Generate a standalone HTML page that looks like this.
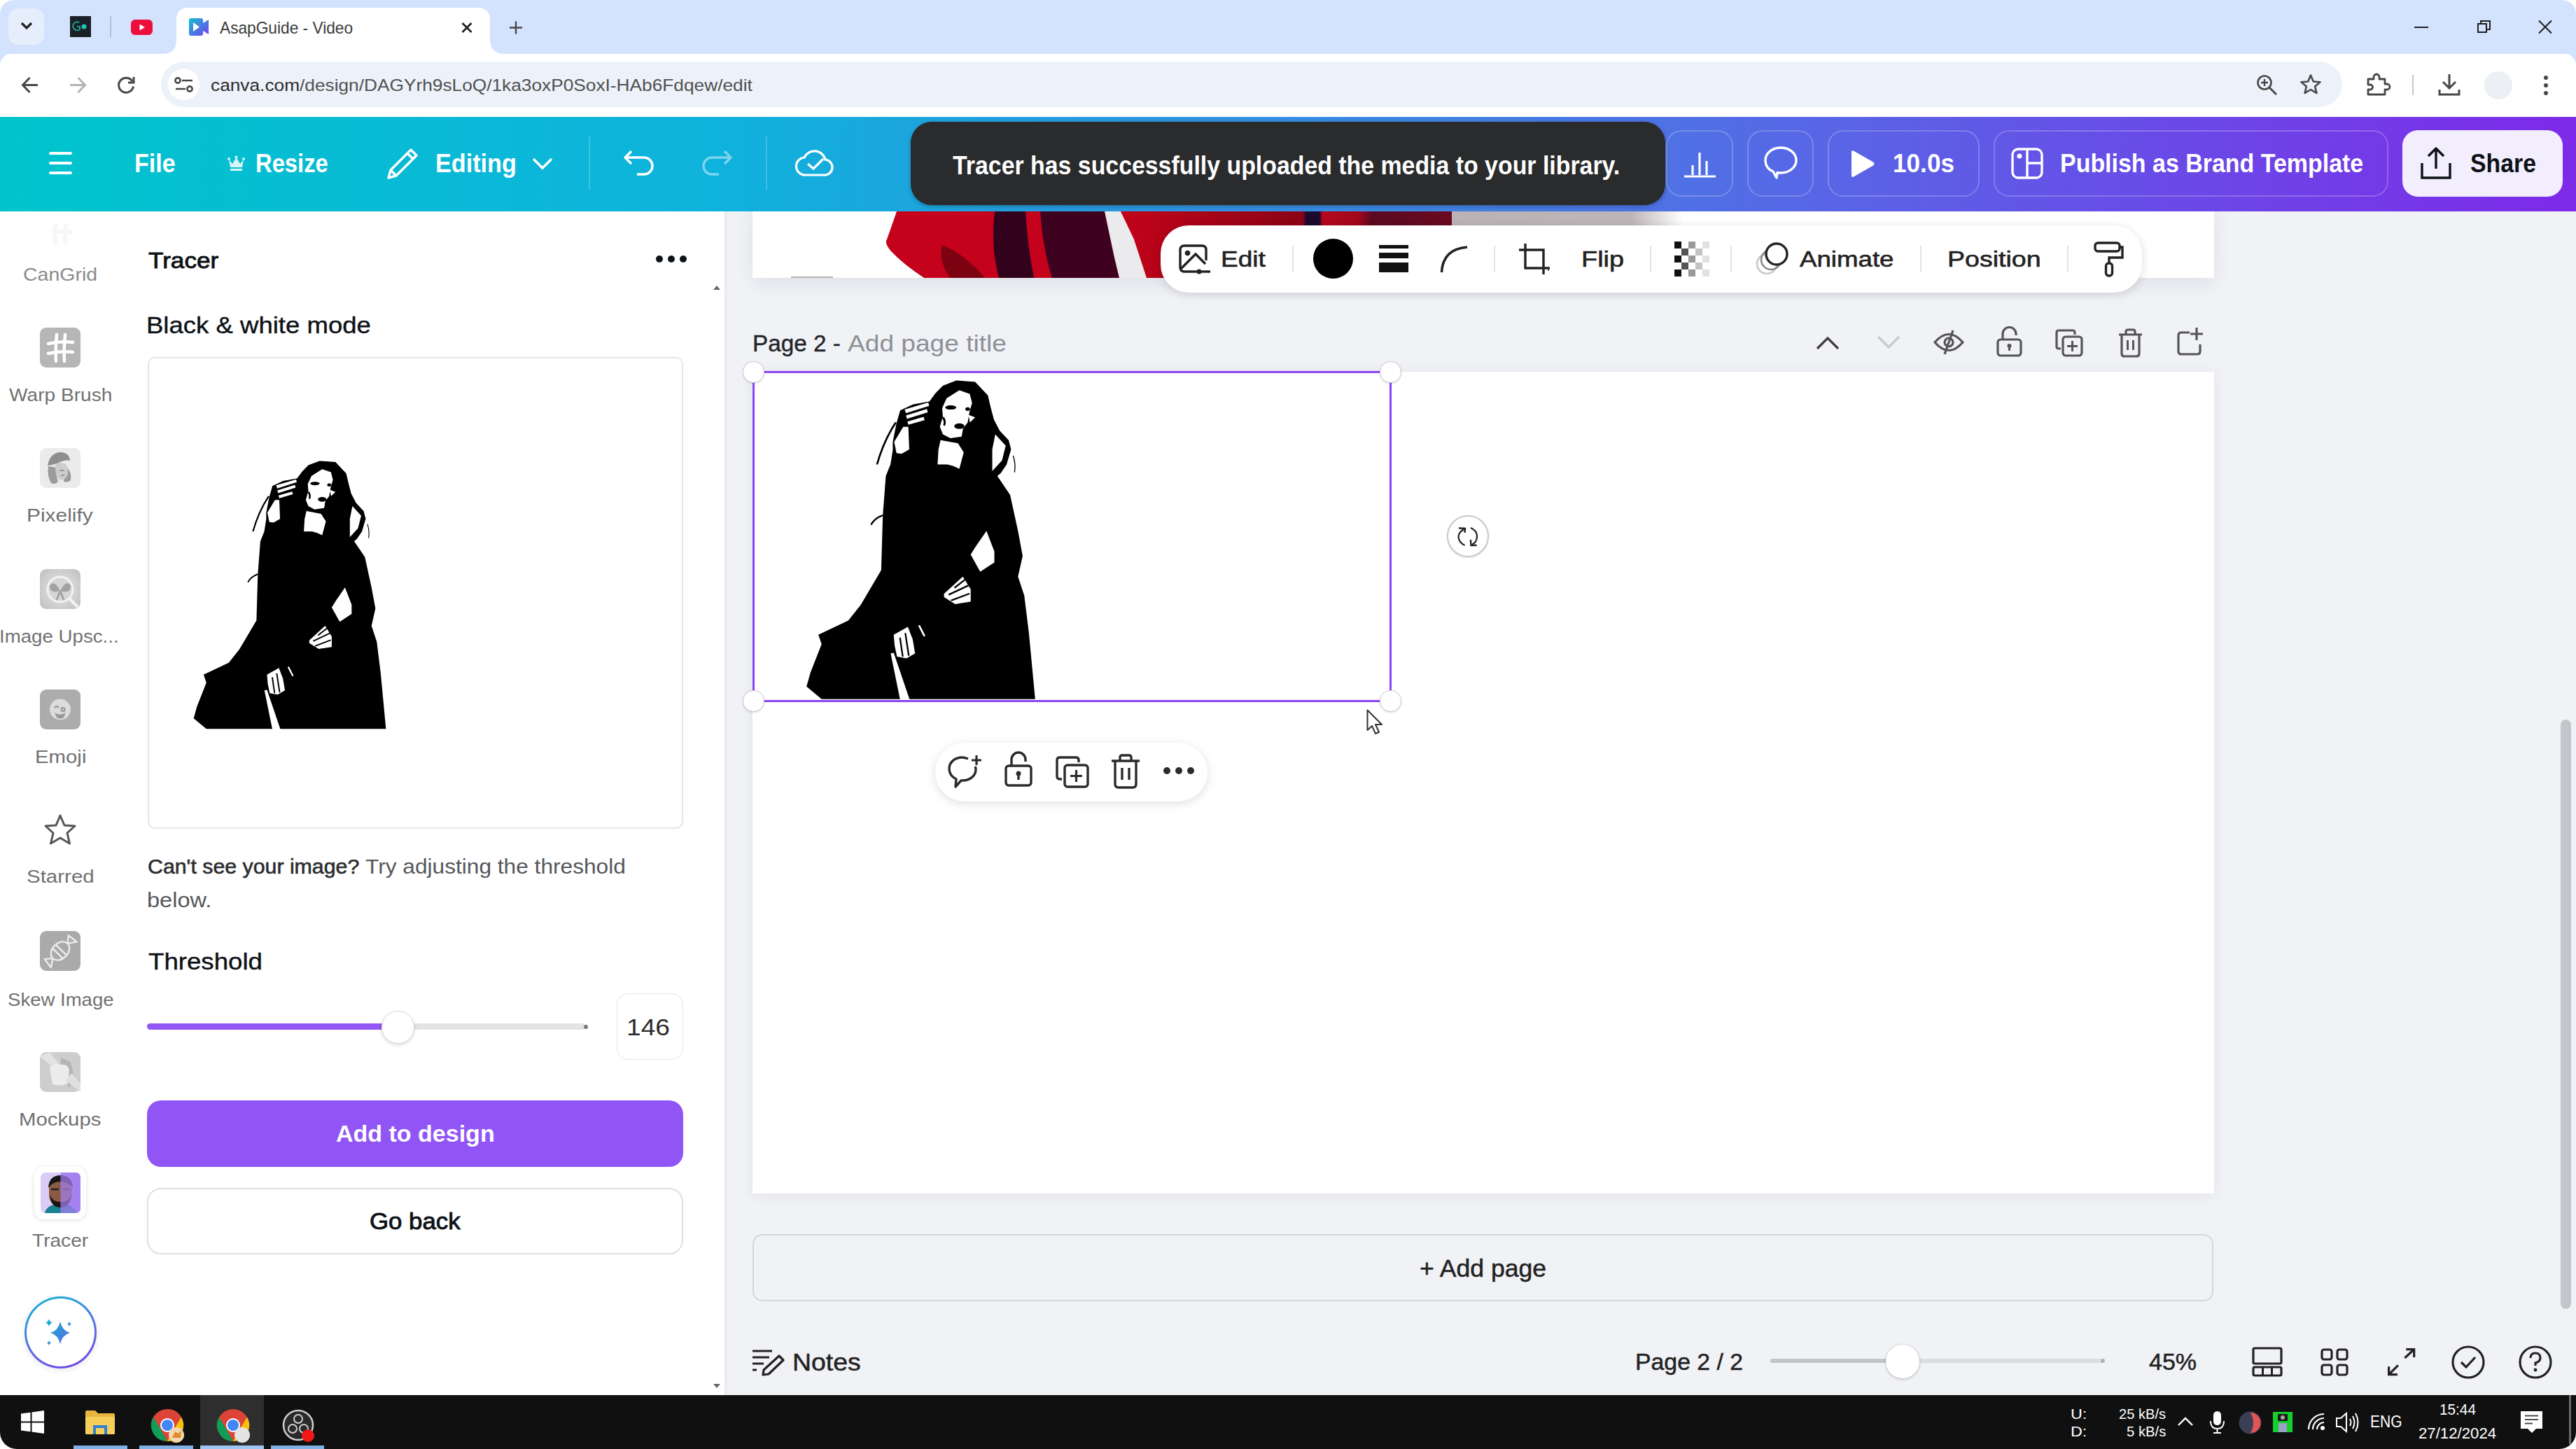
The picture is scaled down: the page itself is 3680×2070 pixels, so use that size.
<!DOCTYPE html>
<html><head><meta charset="utf-8">
<style>
*{margin:0;padding:0;box-sizing:border-box}
html,body{width:3680px;height:2070px;overflow:hidden;background:#fff;font-family:"Liberation Sans",sans-serif;position:relative}
.a{position:absolute}
.t{position:absolute;white-space:nowrap;line-height:1}
svg{position:absolute;overflow:visible}
</style></head><body>
<!-- CANVAS -->
<div class="a" style="left:1035px;top:302px;width:2645px;height:1691px;background:#f1f2f6"></div>
<!-- page 1 strip -->
<div class="a" style="left:1075px;top:290px;width:2088px;height:107px;background:#fff;box-shadow:0 8px 26px rgba(30,30,60,0.08)"></div>
<svg style="left:1075px;top:302px" width="2088" height="95" viewBox="0 0 2088 95">
<defs><linearGradient id="pg" x1="0" x2="1"><stop offset="0" stop-color="#bab2b4"/><stop offset="0.78" stop-color="#bdb6b8"/><stop offset="1" stop-color="#ffffff"/></linearGradient>
<linearGradient id="rg" x1="0" x2="1"><stop offset="0" stop-color="#c2021a"/><stop offset="0.55" stop-color="#8a0414"/><stop offset="0.56" stop-color="#1c0a2e"/><stop offset="0.6" stop-color="#1c0a2e"/><stop offset="0.61" stop-color="#b5081c"/><stop offset="0.72" stop-color="#a0061a"/><stop offset="0.76" stop-color="#5a0a22"/><stop offset="1" stop-color="#6a0a1e"/></linearGradient></defs>
<rect x="999" y="0" width="330" height="95" fill="url(#pg)"/>
<path d="M206 0 L526 0 L563 95 L245 95 Q215 75 198 57 Q188 45 192 40 Z" fill="#c4021b"/>
<path d="M271 48 Q305 62 332 95 L282 95 Q265 70 271 48 Z" fill="#7c0212"/>
<path d="M346 0 L390 0 Q393 50 402 95 L352 95 Q340 50 346 0 Z" fill="#32021c"/>
<path d="M411 0 L503 0 L517 66 L524 95 L428 95 Q415 55 411 0 Z" fill="#3e0220"/>
<path d="M503 0 L526 0 L545 40 L563 95 L524 95 L517 66 Z" fill="#ebeaec"/>
<path d="M526 0 L999 0 L999 95 L563 95 L545 40 Z" fill="url(#rg)"/>
<path d="M55 93 L115 93 L115 95 L55 95 Z" fill="#666" opacity="0.5"/>
</svg>
<!-- page 2 header -->
<div class="t" style="left:1075.0px;top:474px;font-size:33px;color:#222428;-webkit-text-stroke:0.4px #222428;transform:scaleX(1.0082);transform-origin:0 0">Page 2 -</div>
<div class="t" style="left:1211.0px;top:474px;font-size:33px;color:#8d9096;transform:scaleX(1.1244);transform-origin:0 0">Add page title</div>
<svg style="left:2594px;top:480px" width="34" height="20" viewBox="0 0 34 20"><path d="M2 18 L17 3 L32 18" fill="none" stroke="#3d3d3d" stroke-width="3.2"/></svg>
<svg style="left:2681px;top:479px" width="34" height="20" viewBox="0 0 34 20"><path d="M2 2 L17 17 L32 2" fill="none" stroke="#c9cacd" stroke-width="3.2"/></svg>
<svg style="left:2762px;top:470px" width="44" height="38" viewBox="0 0 44 38"><path d="M2 19 Q22 -4 42 19 Q22 42 2 19 Z" fill="none" stroke="#555" stroke-width="3.2"/><circle cx="22" cy="19" r="6" fill="none" stroke="#555" stroke-width="3.2"/><path d="M28 2 L16 36" stroke="#555" stroke-width="3.2"/></svg>
<svg style="left:2852px;top:465px" width="37" height="45" viewBox="0 0 37 45"><path d="M9 20 V12 A9.5 9.5 0 0 1 28 12 V14" fill="none" stroke="#555" stroke-width="3.2"/><rect x="2" y="20" width="33" height="23" rx="4" fill="none" stroke="#555" stroke-width="3.2"/><circle cx="18.5" cy="29" r="3" fill="#555"/><path d="M18.5 30 V36" stroke="#555" stroke-width="3"/></svg>
<svg style="left:2936px;top:470px" width="40" height="40" viewBox="0 0 40 40"><path d="M8 28 H5 Q2 28 2 25 V5 Q2 2 5 2 H25 Q28 2 28 5 V8" fill="none" stroke="#555" stroke-width="3.2"/><rect x="11" y="11" width="27" height="27" rx="4" fill="none" stroke="#555" stroke-width="3.2"/><path d="M24.5 17 V32 M17 24.5 H32" stroke="#555" stroke-width="3"/></svg>
<svg style="left:3025px;top:469px" width="37" height="42" viewBox="0 0 37 42"><path d="M2 9 H35 M12 9 V5 Q12 2 15 2 H22 Q25 2 25 5 V9" fill="none" stroke="#555" stroke-width="3.2"/><path d="M6 9 V36 Q6 40 10 40 H27 Q31 40 31 36 V9" fill="none" stroke="#555" stroke-width="3.2"/><path d="M14.5 17 V31 M22.5 17 V31" stroke="#555" stroke-width="3"/></svg>
<svg style="left:3110px;top:466px" width="39" height="42" viewBox="0 0 39 42"><path d="M18 9 H6 Q2 9 2 13 V36 Q2 40 6 40 H29 Q33 40 33 36 V26" fill="none" stroke="#555" stroke-width="3.2"/><path d="M28 2 V20 M19 11 H37" stroke="#555" stroke-width="3.2"/></svg>
<!-- page 2 -->
<div class="a" style="left:1075px;top:531px;width:2088px;height:1174px;background:#fff;box-shadow:0 2px 18px rgba(30,30,60,0.07)"></div>
<svg style="left:1130px;top:530px" width="370" height="480" viewBox="0 0 1117 1449"><path d="M713 41 L794 47 L849 105 L862 160 L875 209 L900 257 L939 299 L949 338 L930 403 L905 440 L890 453 L945 534 L979 690 L999 798 L979 887 L1006 968 L1026 1130 L1053 1415 L511 1415 L443 1215 L430 1218 L470 1415 L132 1415 L67 1361 L84 1300 L132 1178 L118 1137 L247 1076 L301 1008 L349 927 L389 859 L396 622 L409 453 L429 403 L439 340 L439 306 L455 225 L471 170 L526 144 L597 131 L623 96 L655 63 Z" fill="#000"/><path d="M726 83 L771 99 L781 138 L770 175 L762 222 L742 248 L736 283 L687 290 L655 273 L642 241 L655 196 L652 160 L671 118 Z M765 189 L794 200 L772 222 Z M645 298 L720 312 L745 351 L726 422 L700 410 L674 403 L632 403 L636 338 Z M445 306 L484 241 L506 241 L510 338 L477 357 L455 354 Z M490 166 L592 136 L596 150 L496 182 Z M496 192 L586 164 L590 178 L500 206 Z M502 218 L572 198 L576 212 L506 232 Z M881 273 L926 322 L910 386 L868 432 L868 338 Z M843 690 L877 778 L877 826 L816 866 L775 792 L796 758 Z M660 961 L741 887 L775 941 L775 995 L708 1005 L660 975 Z M443 1137 L504 1103 L525 1158 L535 1218 L498 1239 L457 1232 L447 1184 Z" fill="#fff"/><ellipse cx="689" cy="157" rx="24" ry="9" fill="#000"/><ellipse cx="762" cy="164" rx="10" ry="8" fill="#000"/><ellipse cx="726" cy="238" rx="22" ry="12" fill="#000"/><path d="M655 200 Q668 215 660 235" fill="none" stroke="#000" stroke-width="9"/><path d="M680 965 L765 925 M690 990 L770 960 M705 935 L750 900" stroke="#000" stroke-width="7"/><path d="M470 1150 L482 1232 M493 1130 L508 1228" stroke="#000" stroke-width="7"/><path d="M452 222 Q400 300 371 403" fill="none" stroke="#000" stroke-width="8"/><path d="M396 622 Q360 635 345 663" fill="none" stroke="#000" stroke-width="7"/><path d="M958 365 Q970 400 964 437" fill="none" stroke="#000" stroke-width="4"/><path d="M552 1097 L576 1144" stroke="#fff" stroke-width="8"/></svg>
<div class="a" style="left:1075px;top:530px;width:913px;height:473px;border:3px solid #8b45f2"></div>
<div class="a" style="left:1061px;top:516px;width:31px;height:31px;border-radius:50%;background:#fff;border:1.5px solid #cfcfd3;box-shadow:0 1px 3px rgba(0,0,0,0.15)"></div>
<div class="a" style="left:1971px;top:516px;width:31px;height:31px;border-radius:50%;background:#fff;border:1.5px solid #cfcfd3;box-shadow:0 1px 3px rgba(0,0,0,0.15)"></div>
<div class="a" style="left:1061px;top:986px;width:31px;height:31px;border-radius:50%;background:#fff;border:1.5px solid #cfcfd3;box-shadow:0 1px 3px rgba(0,0,0,0.15)"></div>
<div class="a" style="left:1971px;top:986px;width:31px;height:31px;border-radius:50%;background:#fff;border:1.5px solid #cfcfd3;box-shadow:0 1px 3px rgba(0,0,0,0.15)"></div>
<div class="a" style="left:2067px;top:736px;width:60px;height:60px;border-radius:50%;background:#fff;border:2px solid #c9c9cc;box-shadow:0 1px 3px rgba(0,0,0,0.1)"></div>
<svg style="left:2082px;top:752px" width="30" height="30" viewBox="0 0 30 30"><path d="M10.5 3.5 Q1.5 8 1.5 15 Q2 23 10.5 27" fill="none" stroke="#222" stroke-width="2.2"/><path d="M2 2.5 L11 2.8 L10.6 9" fill="none" stroke="#222" stroke-width="2.4"/><path d="M19 2 Q28 6 28 14.5 Q28 22 21 26" fill="none" stroke="#222" stroke-width="2.2"/><path d="M19 19 L19.4 27 L27.7 27" fill="none" stroke="#222" stroke-width="2.4"/></svg>
<!-- mini toolbar -->
<div class="a" style="left:1336px;top:1061px;width:389px;height:84px;border-radius:42px;background:#fff;box-shadow:0 3px 14px rgba(0,0,0,0.13)"></div>
<svg style="left:1353px;top:1078px" width="52" height="50" viewBox="0 0 52 50"><path d="M30 6 Q24 4 22 4 C11 4 3 11 3 20 C3 27 7 32 13 35 L12 46 L20 37 Q21 37 22 37 C33 37 41 30 41 21 Q41 19 40 17" fill="none" stroke="#2b2b2b" stroke-width="3.4" stroke-linejoin="round"/><path d="M42 1 V15 M35 8 H49" stroke="#2b2b2b" stroke-width="3.2"/></svg>
<svg style="left:1435px;top:1072px" width="40" height="52" viewBox="0 0 40 52"><path d="M10 22 V13 A10 10 0 0 1 30 13 V16" fill="none" stroke="#2b2b2b" stroke-width="3.4"/><rect x="2" y="22" width="36" height="28" rx="4" fill="none" stroke="#2b2b2b" stroke-width="3.4"/><circle cx="20" cy="33" r="3.5" fill="#2b2b2b"/><path d="M20 34 V42" stroke="#2b2b2b" stroke-width="3.4"/></svg>
<svg style="left:1508px;top:1080px" width="48" height="46" viewBox="0 0 48 46"><path d="M9 33 H6 Q2 33 2 29 V6 Q2 2 6 2 H29 Q33 2 33 6 V9" fill="none" stroke="#2b2b2b" stroke-width="3.4"/><rect x="13" y="13" width="33" height="31" rx="4" fill="none" stroke="#2b2b2b" stroke-width="3.4"/><path d="M29.5 20 V37 M21 28.5 H38" stroke="#2b2b2b" stroke-width="3.2"/></svg>
<svg style="left:1586px;top:1077px" width="44" height="50" viewBox="0 0 44 50"><path d="M2 10 H42 M14 10 V5 Q14 2 17 2 H27 Q30 2 30 5 V10" fill="none" stroke="#2b2b2b" stroke-width="3.4"/><path d="M7 10 V43 Q7 48 12 48 H32 Q37 48 37 43 V10" fill="none" stroke="#2b2b2b" stroke-width="3.4"/><path d="M17 20 V37 M27 20 V37" stroke="#2b2b2b" stroke-width="3.4"/></svg>
<div class="a" style="left:1662px;top:1096px;width:10px;height:10px;border-radius:50%;background:#2b2b2b"></div>
<div class="a" style="left:1679px;top:1096px;width:10px;height:10px;border-radius:50%;background:#2b2b2b"></div>
<div class="a" style="left:1696px;top:1096px;width:10px;height:10px;border-radius:50%;background:#2b2b2b"></div>
<!-- cursor -->
<svg style="left:1952px;top:1013px" width="26" height="38" viewBox="0 0 26 38"><path d="M1.5 1.5 L1.5 30 L8 24 L13 35 L18 33 L13 22 L22 22 Z" fill="#fff" stroke="#333" stroke-width="2" stroke-linejoin="round"/></svg>
<!-- floating toolbar -->
<div class="a" style="left:1658px;top:322px;width:1402px;height:96px;border-radius:40px;background:#fff;box-shadow:0 3px 14px rgba(0,0,0,0.14)"></div>
<svg style="left:1683px;top:348px" width="48" height="45" viewBox="0 0 48 45"><path d="M22 40 H9 Q3 40 3 34 V9 Q3 3 9 3 H34 Q40 3 40 9 V24" fill="none" stroke="#222" stroke-width="3.4"/><circle cx="13.5" cy="13.5" r="3.8" fill="#222"/><path d="M4 36 L25 15 L39 29" fill="none" stroke="#222" stroke-width="3.4"/><path d="M22 40 H46" stroke="#222" stroke-width="3.4"/><circle cx="30" cy="40" r="3.5" fill="#222"/></svg>
<div class="t" style="left:1744.1px;top:354px;font-size:32px;color:#222;-webkit-text-stroke:0.6px #222;transform:scaleX(1.1574);transform-origin:0 0">Edit</div>
<div class="a" style="left:1846px;top:351px;width:2px;height:38px;background:#e3e3e5"></div>
<div class="a" style="left:1876px;top:341px;width:57px;height:57px;border-radius:50%;background:#000"></div>
<div class="a" style="left:1970px;top:350px;width:42px;height:5px;background:#111"></div>
<div class="a" style="left:1970px;top:361px;width:42px;height:8px;background:#111"></div>
<div class="a" style="left:1970px;top:375px;width:42px;height:14px;background:#111"></div>
<svg style="left:2057px;top:350px" width="42" height="40" viewBox="0 0 42 40"><path d="M2.5 39 Q4 6 39 3" fill="none" stroke="#222" stroke-width="3.6"/></svg>
<div class="a" style="left:2134px;top:351px;width:2px;height:38px;background:#e3e3e5"></div>
<svg style="left:2168px;top:346px" width="48" height="48" viewBox="0 0 48 48"><path d="M11 2 V37 H46 M2 11 H37 V46" fill="none" stroke="#222" stroke-width="3.4"/><circle cx="44" cy="40" r="1" fill="#222"/></svg>
<div class="t" style="left:2259.3px;top:354px;font-size:32px;color:#222;-webkit-text-stroke:0.6px #222;transform:scaleX(1.1837);transform-origin:0 0">Flip</div>
<div class="a" style="left:2357px;top:351px;width:2px;height:38px;background:#e3e3e5"></div>
<svg style="left:2392px;top:345px" width="50" height="50" viewBox="0 0 50 50">
<rect x="0" y="0" width="10" height="10" fill="#111"/><rect x="20" y="0" width="10" height="10" fill="#999"/><rect x="40" y="0" width="10" height="10" fill="#e2e2e2"/>
<rect x="10" y="10" width="10" height="10" fill="#555"/><rect x="30" y="10" width="10" height="10" fill="#c4c4c4"/>
<rect x="0" y="20" width="10" height="10" fill="#111"/><rect x="20" y="20" width="10" height="10" fill="#999"/><rect x="40" y="20" width="10" height="10" fill="#e2e2e2"/>
<rect x="10" y="30" width="10" height="10" fill="#555"/><rect x="30" y="30" width="10" height="10" fill="#c4c4c4"/>
<rect x="0" y="40" width="10" height="10" fill="#111"/><rect x="20" y="40" width="10" height="10" fill="#999"/><rect x="40" y="40" width="10" height="10" fill="#e2e2e2"/>
</svg>
<div class="a" style="left:2472px;top:351px;width:2px;height:38px;background:#e3e3e5"></div>
<svg style="left:2507px;top:344px" width="50" height="50" viewBox="0 0 50 50"><circle cx="17" cy="33" r="14" fill="none" stroke="#c8c8c8" stroke-width="2.6"/><circle cx="23" cy="27" r="14" fill="none" stroke="#8a8a8a" stroke-width="2.6"/><circle cx="31" cy="19" r="15" fill="#fff" stroke="#222" stroke-width="3.4"/></svg>
<div class="t" style="left:2571.2px;top:354px;font-size:32px;color:#222;-webkit-text-stroke:0.6px #222;transform:scaleX(1.1453);transform-origin:0 0">Animate</div>
<div class="a" style="left:2743px;top:351px;width:2px;height:38px;background:#e3e3e5"></div>
<div class="t" style="left:2782.3px;top:354px;font-size:32px;color:#222;-webkit-text-stroke:0.6px #222;transform:scaleX(1.1727);transform-origin:0 0">Position</div>
<div class="a" style="left:2953px;top:351px;width:2px;height:38px;background:#e3e3e5"></div>
<svg style="left:2990px;top:344px" width="46" height="52" viewBox="0 0 46 52"><rect x="3" y="3" width="35" height="12" rx="4" fill="none" stroke="#222" stroke-width="3.4"/><path d="M38 9 H42 V24 H23 V32" fill="none" stroke="#222" stroke-width="3.4"/><rect x="18.5" y="32" width="9" height="18" rx="4" fill="none" stroke="#222" stroke-width="3.4"/></svg>
<!-- add page -->
<div class="a" style="left:1075px;top:1763px;width:2087px;height:96px;border:2px solid #d6d7db;border-radius:14px"></div>
<div class="t" style="left:2028.0px;top:1794px;font-size:35px;color:#222;-webkit-text-stroke:0.5px #222;transform:scaleX(1.0170);transform-origin:0 0">+ Add page</div>
<!-- bottom bar -->
<svg style="left:1073px;top:1927px" width="48" height="38" viewBox="0 0 48 38"><path d="M2 3 H30 M2 12 H26 M2 21 H18 M2 30 H8" stroke="#222" stroke-width="3.2"/><path d="M40 10 L46 16 L25 36 L17 37 L18 30 Z" fill="none" stroke="#222" stroke-width="3.2" stroke-linejoin="round"/></svg>
<div class="t" style="left:1131.7px;top:1928px;font-size:35px;color:#222;-webkit-text-stroke:0.5px #222;transform:scaleX(1.0693);transform-origin:0 0">Notes</div>
<div class="t" style="left:2335.5px;top:1928px;font-size:34px;color:#222;-webkit-text-stroke:0.5px #222;transform:scaleX(0.9941);transform-origin:0 0">Page 2 / 2</div>
<div class="a" style="left:2529px;top:1941px;width:477px;height:6px;border-radius:3px;background:#dcdde1"></div>
<div class="a" style="left:2529px;top:1941px;width:190px;height:6px;border-radius:3px;background:#c2c4c9"></div>
<div class="a" style="left:3001px;top:1941px;width:6px;height:6px;border-radius:50%;background:#b0b2b6"></div>
<div class="a" style="left:2694px;top:1921px;width:48px;height:48px;border-radius:50%;background:#fff;box-shadow:0 1px 4px rgba(0,0,0,0.25)"></div>
<div class="t" style="left:3070.0px;top:1928px;font-size:34px;color:#222;-webkit-text-stroke:0.5px #222;transform:scaleX(1.0000);transform-origin:0 0">45%</div>
<svg style="left:3216px;top:1924px" width="46" height="44" viewBox="0 0 46 44"><rect x="3" y="2" width="40" height="22" rx="2" fill="none" stroke="#222" stroke-width="3.2"/><rect x="3" y="29" width="40" height="12" rx="2" fill="none" stroke="#222" stroke-width="3.2"/><path d="M16.5 29 V41 M29.5 29 V41" stroke="#222" stroke-width="3"/></svg>
<svg style="left:3315px;top:1926px" width="40" height="40" viewBox="0 0 40 40"><rect x="2" y="2" width="14" height="14" rx="3" fill="none" stroke="#222" stroke-width="3.2"/><rect x="24" y="2" width="14" height="14" rx="3" fill="none" stroke="#222" stroke-width="3.2"/><rect x="2" y="24" width="14" height="14" rx="3" fill="none" stroke="#222" stroke-width="3.2"/><rect x="24" y="24" width="14" height="14" rx="3" fill="none" stroke="#222" stroke-width="3.2"/></svg>
<svg style="left:3410px;top:1926px" width="41" height="40" viewBox="0 0 41 40"><path d="M25.4 14 L38.7 1.6 M27.3 1.6 H38.7 V13 M15.9 24.4 L2.6 37.7 M2.6 26.3 V37.7 H14.9" fill="none" stroke="#222" stroke-width="3.2"/></svg>
<svg style="left:3502px;top:1922px" width="48" height="48" viewBox="0 0 48 48"><circle cx="24" cy="24" r="22" fill="none" stroke="#222" stroke-width="3.2"/><path d="M14 24 L21 31 L34 17" fill="none" stroke="#222" stroke-width="3.2"/></svg>
<svg style="left:3598px;top:1922px" width="48" height="48" viewBox="0 0 48 48"><circle cx="24" cy="24" r="22" fill="none" stroke="#222" stroke-width="3.2"/><path d="M17 18 Q17 11 24 11 Q31 11 31 18 Q31 23 24 25 V29" fill="none" stroke="#222" stroke-width="3.2"/><circle cx="24" cy="35" r="2.4" fill="#222"/></svg>
<!-- scrollbar -->
<div class="a" style="left:3658px;top:1028px;width:15px;height:842px;border-radius:8px;background:#c4c5ca"></div>
<!-- LEFT RAIL -->
<div class="a" style="left:0;top:302px;width:172px;height:1691px;background:#fff"></div>
<svg style="left:68px;top:318px" width="40" height="34" viewBox="0 0 40 34"><path d="M6 14 Q20 12 36 14 M12 2 Q10 18 12 32 M26 2 Q24 18 26 32" fill="none" stroke="#f7f7f7" stroke-width="6"/></svg>
<div class="t lbl" style="left:32.5px;top:379px;font-size:26px;color:#8a8a8a;transform:scaleX(1.0957);transform-origin:0 0">CanGrid</div>
<div class="a" style="left:57px;top:468px;width:58px;height:57px;border-radius:9px;background:#b6b6b6"></div>
<svg style="left:57px;top:468px" width="58" height="57" viewBox="0 0 58 57"><path d="M12 23 Q29 19 47 21 M12 37 Q29 33 47 35 M24 10 Q22 30 23 48 M36 10 Q34 30 35 48" fill="none" stroke="#fff" stroke-width="4.5" stroke-linecap="round"/></svg>
<div class="t lbl" style="left:13.0px;top:551px;font-size:26px;color:#717171;transform:scaleX(1.0815);transform-origin:0 0">Warp Brush</div>
<div class="a" style="left:57px;top:640px;width:58px;height:57px;border-radius:9px;background:#ebebeb"></div>
<svg style="left:57px;top:640px" width="58" height="57" viewBox="0 0 58 57"><path d="M12 26 Q10 40 16 50 Q22 53 26 48 Q22 38 24 28 Z" fill="#9c9c9c"/><path d="M37 26 Q46 34 44 46 Q40 50 34 48 Z" fill="#9a9a9a"/><path d="M22 22 Q30 18 38 24 Q42 34 38 42 Q32 48 26 44 Q21 36 22 22 Z" fill="#cdcdcd"/><path d="M28 32 Q32 31 35 33 M30 39 Q33 40 35 38" fill="none" stroke="#8a8a8a" stroke-width="1.5"/><path d="M11 25 Q14 8 28 6 Q42 6 43 18 Q36 16 24 22 Q16 25 11 25 Z" fill="#8e8e8e"/></svg>
<div class="t lbl" style="left:37.7px;top:723px;font-size:26px;color:#717171;transform:scaleX(1.1500);transform-origin:0 0">Pixelify</div>
<div class="a" style="left:57px;top:813px;width:58px;height:57px;border-radius:9px;background:radial-gradient(circle at 50% 50%,#e6e6e6 0%,#cfcfcf 60%,#bdbdbd 100%)"></div>
<svg style="left:57px;top:813px" width="58" height="57" viewBox="0 0 58 57"><circle cx="29" cy="29" r="18" fill="#d6d6d6" stroke="#f2f2f2" stroke-width="3"/><path d="M29 31 Q20 14 14 24 Q14 36 29 31 Z M29 31 Q38 14 44 24 Q44 36 29 31 Z" fill="#a2a2a2"/><path d="M29 31 L24 44 M29 31 L34 44" stroke="#a2a2a2" stroke-width="3"/><path d="M42 42 L53 53" stroke="#f2f2f2" stroke-width="4.5" stroke-linecap="round"/></svg>
<div class="t lbl" style="left:-0.6px;top:896px;font-size:26px;color:#717171;transform:scaleX(1.0641);transform-origin:0 0">Image Upsc...</div>
<div class="a" style="left:57px;top:985px;width:58px;height:57px;border-radius:9px;background:#acacac"></div>
<svg style="left:57px;top:985px" width="58" height="57" viewBox="0 0 58 57"><circle cx="29" cy="28.5" r="15" fill="#dcdcdc"/><path d="M21 26 Q24 22 27 26 M33 26 A2.5 2.5 0 1 0 33.1 26" fill="none" stroke="#9a9a9a" stroke-width="2.5"/><path d="M21 33 Q29 38 37 33 L34 40 Q29 43 24 40 Z" fill="#9a9a9a"/></svg>
<div class="t lbl" style="left:49.7px;top:1068px;font-size:26px;color:#717171;transform:scaleX(1.1290);transform-origin:0 0">Emoji</div>
<svg style="left:62px;top:1162px" width="48" height="48" viewBox="0 0 48 48"><path d="M24 3 L30 17 L45 18 L34 28 L37.5 43 L24 35 L10.5 43 L14 28 L3 18 L18 17 Z" fill="none" stroke="#555" stroke-width="3" stroke-linejoin="round"/></svg>
<div class="t lbl" style="left:38.3px;top:1239px;font-size:26px;color:#717171;transform:scaleX(1.1341);transform-origin:0 0">Starred</div>
<div class="a" style="left:57px;top:1330px;width:58px;height:57px;border-radius:9px;background:#aaaaaa"></div>
<svg style="left:57px;top:1330px" width="58" height="57" viewBox="0 0 58 57"><g transform="rotate(-45 29 28.5)"><ellipse cx="29" cy="28.5" rx="15" ry="11" fill="none" stroke="#ececec" stroke-width="2.4"/><path d="M24 18 V39 M31 17.5 V39.5" stroke="#ececec" stroke-width="2.4"/><path d="M14 28.5 L5 21 L3 36 Z M44 28.5 L53 21 L55 36 Z" fill="none" stroke="#ececec" stroke-width="2.4" stroke-linejoin="round"/></g></svg>
<div class="t lbl" style="left:10.5px;top:1415px;font-size:26px;color:#717171;transform:scaleX(1.0596);transform-origin:0 0">Skew Image</div>
<div class="a" style="left:57px;top:1503px;width:58px;height:57px;border-radius:9px;background:#cdcdcd"></div>
<svg style="left:57px;top:1503px" width="58" height="57" viewBox="0 0 58 57"><path d="M0 6 L14 0 L30 20 L24 26 Z" fill="#e2e2e2"/><path d="M14 22 Q22 14 30 18 Q40 16 42 26 L40 44 Q30 50 18 46 Z" fill="#ececec"/><path d="M30 8 L44 14 L50 40 L40 52 L42 26 Q40 16 30 18 Z" fill="#b4b4b4"/><path d="M36 40 L58 57 L58 46 L46 30 Z" fill="#e0e0e0"/></svg>
<div class="t lbl" style="left:26.7px;top:1586px;font-size:26px;color:#717171;transform:scaleX(1.1287);transform-origin:0 0">Mockups</div>
<div class="a" style="left:49px;top:1667px;width:74px;height:75px;border-radius:14px;background:#fff;box-shadow:0 1px 6px rgba(0,0,0,0.12)"></div>
<div class="a" style="left:58px;top:1675px;width:57px;height:58px;border-radius:7px;background:linear-gradient(90deg,#d9cdf6 0%,#d9cdf6 50%,#b79af2 50%,#a27ff0 100%)"></div>
<svg style="left:58px;top:1675px" width="57" height="58" viewBox="0 0 57 58"><defs><clipPath id="tc"><rect x="0" y="0" width="57" height="58" rx="7"/></clipPath></defs><g clip-path="url(#tc)">
<path d="M6 58 Q8 46 28.5 44 Q49 46 51 58 Z" fill="#17828f"/>
<path d="M12 24 Q12 6 28.5 6 Q45 6 45 24 L45 30 Q45 48 28.5 50 Q12 48 12 30 Z" fill="#8a5a42"/>
<path d="M11 22 Q12 4 28.5 4 Q45 4 46 22 Q40 13 28.5 13 Q17 13 11 22 Z" fill="#161616"/>
<path d="M13 32 Q15 50 28.5 50 Q42 50 44 32 Q40 42 28.5 42 Q17 42 13 32 Z" fill="#1b1412"/>
<path d="M15 24 H26 M31 24 H42" stroke="#222" stroke-width="2.5"/>
<rect x="28.5" y="0" width="29" height="58" fill="#a57ff0" opacity="0.72"/>
</g></svg>
<div class="t lbl" style="left:46.0px;top:1759px;font-size:26px;color:#717171;transform:scaleX(1.0811);transform-origin:0 0">Tracer</div>
<div class="a" style="left:35px;top:1852px;width:103px;height:103px;border-radius:50%;background:linear-gradient(160deg,#13b9d4,#5a6be4 60%,#7a3fe6);box-shadow:0 2px 10px rgba(0,0,0,0.1)"></div>
<div class="a" style="left:38px;top:1855px;width:97px;height:97px;border-radius:50%;background:#fff"></div>
<svg style="left:58px;top:1876px" width="56" height="56" viewBox="0 0 56 56"><defs><linearGradient id="sp" x1="0" y1="0" x2="1" y2="1"><stop offset="0" stop-color="#17a7d6"/><stop offset="1" stop-color="#5b6fe2"/></linearGradient></defs><path d="M28 12 Q31 25 42 28 Q31 31 28 44 Q25 31 14 28 Q25 25 28 12 Z" fill="url(#sp)"/><path d="M12 8 Q13 12.5 17 13.5 Q13 14.5 12 19 Q11 14.5 7 13.5 Q11 12.5 12 8 Z" fill="#17a7d6"/><path d="M41 12 Q41.7 15 44 15.5 Q41.7 16 41 19 Q40.3 16 38 15.5 Q40.3 15 41 12 Z" fill="#3f8ee0"/><path d="M12 39 Q12.7 42 15 42.5 Q12.7 43 12 46 Q11.3 43 9 42.5 Q11.3 42 12 39 Z" fill="#2a9ad9"/></svg>
<!-- SIDE PANEL -->
<div class="a" style="left:172px;top:302px;width:863px;height:1691px;background:#fff"></div>
<div class="a" style="left:1035px;top:302px;width:5px;height:1691px;background:linear-gradient(90deg,#e7e8ec,#f1f2f6)"></div>
<div class="t" style="left:212.0px;top:356px;font-size:32px;color:#0d1216;-webkit-text-stroke:0.9px #0d1216;transform:scaleX(1.0978);transform-origin:0 0">Tracer</div>
<div class="a" style="left:937px;top:365px;width:10px;height:10px;border-radius:50%;background:#0d1216"></div>
<div class="a" style="left:954px;top:365px;width:10px;height:10px;border-radius:50%;background:#0d1216"></div>
<div class="a" style="left:971px;top:365px;width:10px;height:10px;border-radius:50%;background:#0d1216"></div>
<svg style="left:1019px;top:408px" width="10" height="6" viewBox="0 0 10 6"><path d="M0 6 L5 0 L10 6 Z" fill="#666"/></svg>
<div class="t" style="left:209.2px;top:447px;font-size:34px;color:#0d1216;-webkit-text-stroke:0.4px #0d1216;transform:scaleX(1.0746);transform-origin:0 0">Black &amp; white mode</div>
<div class="a" style="left:211px;top:510px;width:765px;height:674px;border:2px solid #e6e6e8;border-radius:10px;background:#fff"></div>
<!-- panel silhouette placeholder -->
<svg style="left:258.3px;top:646.9px" width="311.2" height="403.7" viewBox="0 0 1117 1449"><path d="M713 41 L794 47 L849 105 L862 160 L875 209 L900 257 L939 299 L949 338 L930 403 L905 440 L890 453 L945 534 L979 690 L999 798 L979 887 L1006 968 L1026 1130 L1053 1415 L511 1415 L443 1215 L430 1218 L470 1415 L132 1415 L67 1361 L84 1300 L132 1178 L118 1137 L247 1076 L301 1008 L349 927 L389 859 L396 622 L409 453 L429 403 L439 340 L439 306 L455 225 L471 170 L526 144 L597 131 L623 96 L655 63 Z" fill="#000"/><path d="M726 83 L771 99 L781 138 L770 175 L762 222 L742 248 L736 283 L687 290 L655 273 L642 241 L655 196 L652 160 L671 118 Z M765 189 L794 200 L772 222 Z M645 298 L720 312 L745 351 L726 422 L700 410 L674 403 L632 403 L636 338 Z M445 306 L484 241 L506 241 L510 338 L477 357 L455 354 Z M490 166 L592 136 L596 150 L496 182 Z M496 192 L586 164 L590 178 L500 206 Z M502 218 L572 198 L576 212 L506 232 Z M881 273 L926 322 L910 386 L868 432 L868 338 Z M843 690 L877 778 L877 826 L816 866 L775 792 L796 758 Z M660 961 L741 887 L775 941 L775 995 L708 1005 L660 975 Z M443 1137 L504 1103 L525 1158 L535 1218 L498 1239 L457 1232 L447 1184 Z" fill="#fff"/><ellipse cx="689" cy="157" rx="24" ry="9" fill="#000"/><ellipse cx="762" cy="164" rx="10" ry="8" fill="#000"/><ellipse cx="726" cy="238" rx="22" ry="12" fill="#000"/><path d="M655 200 Q668 215 660 235" fill="none" stroke="#000" stroke-width="9"/><path d="M680 965 L765 925 M690 990 L770 960 M705 935 L750 900" stroke="#000" stroke-width="7"/><path d="M470 1150 L482 1232 M493 1130 L508 1228" stroke="#000" stroke-width="7"/><path d="M452 222 Q400 300 371 403" fill="none" stroke="#000" stroke-width="8"/><path d="M396 622 Q360 635 345 663" fill="none" stroke="#000" stroke-width="7"/><path d="M958 365 Q970 400 964 437" fill="none" stroke="#000" stroke-width="4"/><path d="M552 1097 L576 1144" stroke="#fff" stroke-width="8"/></svg>
<div class="t" style="left:211.0px;top:1223.5px;font-size:29px;color:#2b2c30;-webkit-text-stroke:0.6px #2b2c30;transform:scaleX(1.0451);transform-origin:0 0">Can't see your image?</div>
<div class="t" style="left:522.0px;top:1223.5px;font-size:29px;color:#55575c;transform:scaleX(1.0914);transform-origin:0 0">Try adjusting the threshold</div>
<div class="t" style="left:210.2px;top:1271.5px;font-size:29px;color:#55575c;transform:scaleX(1.1218);transform-origin:0 0">below.</div>
<div class="t" style="left:212.0px;top:1357px;font-size:33px;color:#0d1216;-webkit-text-stroke:0.4px #0d1216;transform:scaleX(1.1103);transform-origin:0 0">Threshold</div>
<div class="a" style="left:210px;top:1462px;width:627px;height:9px;border-radius:5px;background:#e4e4e6"></div>
<div class="a" style="left:210px;top:1462px;width:360px;height:9px;border-radius:5px;background:#9257f5"></div>
<div class="a" style="left:834px;top:1464px;width:6px;height:6px;border-radius:50%;background:#7a7a7a"></div>
<div class="a" style="left:545px;top:1444px;width:47px;height:47px;border-radius:50%;background:#fff;border:1.5px solid #dcdcdc;box-shadow:0 2px 5px rgba(0,0,0,0.15)"></div>
<div class="a" style="left:881px;top:1419px;width:95px;height:95px;border:1.5px solid #e4e4e6;border-radius:16px;background:#fff"></div>
<div class="t" style="left:895.1px;top:1450px;font-size:34px;color:#2a2a2c;transform:scaleX(1.0926);transform-origin:0 0">146</div>
<div class="a" style="left:210px;top:1572px;width:766px;height:95px;border-radius:20px;background:#9155f6"></div>
<div class="t" style="left:480.0px;top:1602px;font-size:34px;font-weight:bold;color:#fff;transform:scaleX(1.0000);transform-origin:0 0">Add to design</div>
<div class="a" style="left:210px;top:1697px;width:766px;height:95px;border-radius:20px;background:#fff;border:2px solid #dedfe2"></div>
<div class="t" style="left:528.0px;top:1727px;font-size:34px;color:#0d1216;-webkit-text-stroke:0.9px #0d1216;transform:scaleX(1.0238);transform-origin:0 0">Go back</div>
<svg style="left:1019px;top:1977px" width="10" height="6" viewBox="0 0 10 6"><path d="M0 0 L5 6 L10 0 Z" fill="#666"/></svg>
<!-- BROWSER CHROME -->
<div class="a" style="left:0;top:0;width:3680px;height:95px;background:#d3e3fd;border-radius:20px 20px 0 0"></div>
<div class="a" style="left:12px;top:12px;width:51px;height:52px;border-radius:14px;background:#e6eefc"></div>
<svg style="left:28px;top:30px" width="20" height="14" viewBox="0 0 20 14"><path d="M3 3 L10 10 L17 3" fill="none" stroke="#1f1f1f" stroke-width="3.2"/></svg>
<div class="a" style="left:100px;top:23px;width:30px;height:30px;background:#1b2026"></div>
<svg style="left:100px;top:23px" width="30" height="30" viewBox="0 0 30 30"><path d="M13 9 A6 6 0 1 0 14 19 L14 15 L10 15" fill="none" stroke="#19c3b3" stroke-width="1.6"/><circle cx="20" cy="15" r="3.5" fill="#19c3b3"/></svg>
<div class="a" style="left:157px;top:23px;width:2px;height:30px;background:#a9c1e4"></div>
<div class="a" style="left:187px;top:28px;width:31px;height:22px;border-radius:6px;background:#ec0f3c"></div>
<svg style="left:187px;top:28px" width="31" height="22" viewBox="0 0 31 22"><path d="M12.5 6.5 L20 11 L12.5 15.5 Z" fill="#fff"/></svg>
<!-- active tab -->
<svg style="left:232px;top:11px" width="490" height="66" viewBox="0 0 490 66"><path d="M0 66 Q20 66 20 46 L20 18 Q20 0 38 0 L450 0 Q468 0 468 18 L468 46 Q468 66 490 66 Z" fill="#fff"/></svg>
<svg style="left:268px;top:25px" width="32" height="27" viewBox="0 0 32 27"><defs><linearGradient id="cg" x1="0" y1="0" x2="1" y2="1"><stop offset="0" stop-color="#10c0d0"/><stop offset="1" stop-color="#7a3df0"/></linearGradient></defs><path d="M2 4 Q2 1 5 1 L19 1 Q22 1 22 4 L22 8 L30 3 L30 24 L22 19 L22 23 Q22 26 19 26 L5 26 Q2 26 2 23 Z" fill="url(#cg)"/><path d="M8 7 L17 13.5 L8 20 Z" fill="#fff"/></svg>
<div class="t" style="left:314.0px;top:27.7px;font-size:24px;color:#3a3a3a;transform:scaleX(0.9453);transform-origin:0 0">AsapGuide - Video</div>
<svg style="left:659px;top:32px" width="16" height="15" viewBox="0 0 16 15"><path d="M1.5 1 L14.5 14 M14.5 1 L1.5 14" stroke="#1f1f1f" stroke-width="2.6"/></svg>
<svg style="left:727px;top:30px" width="20" height="19" viewBox="0 0 20 19"><path d="M10 0.5 V18.5 M1 9.5 H19" stroke="#474747" stroke-width="2.4"/></svg>
<!-- window controls -->
<div class="a" style="left:3449px;top:38px;width:20px;height:2px;background:#1f1f1f"></div>
<svg style="left:3539px;top:29px" width="19" height="18" viewBox="0 0 19 18"><path d="M1 5 H13 V17 H1 Z M5 5 V1 H18 V13 H13" fill="none" stroke="#1f1f1f" stroke-width="2"/></svg>
<svg style="left:3626px;top:29px" width="20" height="19" viewBox="0 0 20 19"><path d="M1 0.5 L19 18.5 M19 0.5 L1 18.5" stroke="#1f1f1f" stroke-width="2"/></svg>
<!-- toolbar -->
<div class="a" style="left:0;top:77px;width:3680px;height:90px;background:#fff;border-radius:16px 16px 0 0"></div>
<svg style="left:30px;top:109px" width="26" height="25" viewBox="0 0 26 25"><path d="M24 12.5 H3 M12.5 2 L2.5 12.5 L12.5 23" fill="none" stroke="#474747" stroke-width="3"/></svg>
<svg style="left:98px;top:109px" width="26" height="25" viewBox="0 0 26 25"><path d="M2 12.5 H23 M13.5 2 L23.5 12.5 L13.5 23" fill="none" stroke="#b4b4b4" stroke-width="3"/></svg>
<svg style="left:167px;top:108px" width="27" height="27" viewBox="0 0 27 27"><path d="M22 8 A10.5 10.5 0 1 0 23.5 15.5" fill="none" stroke="#474747" stroke-width="3"/><path d="M24 2 V10 H16" fill="none" stroke="#474747" stroke-width="3"/></svg>
<div class="a" style="left:230px;top:88px;width:3116px;height:65px;border-radius:33px;background:#edf2fa"></div>
<div class="a" style="left:240px;top:98px;width:45px;height:45px;border-radius:50%;background:#fff"></div>
<svg style="left:249px;top:110px" width="28" height="22" viewBox="0 0 28 22"><circle cx="5" cy="5" r="3.6" fill="none" stroke="#474747" stroke-width="2.6"/><path d="M11 5 H26 M2 17 H16" stroke="#474747" stroke-width="2.6"/><circle cx="22" cy="17" r="3.6" fill="none" stroke="#474747" stroke-width="2.6"/></svg>
<div class="t" style="left:300.8px;top:110px;font-size:24.5px;color:#2a2a2a;transform:scaleX(1.0721);transform-origin:0 0">canva.com<span style="color:#505050">/design/DAGYrh9sLoQ/1ka3oxP0SoxI-HAb6Fdqew/edit</span></div>
<svg style="left:3223px;top:106px" width="32" height="30" viewBox="0 0 32 30"><circle cx="12" cy="12" r="9.5" fill="none" stroke="#474747" stroke-width="2.6"/><path d="M12 7 V17 M7 12 H17" stroke="#474747" stroke-width="2.4"/><path d="M19 19 L29 29" stroke="#474747" stroke-width="3"/></svg>
<svg style="left:3285px;top:105px" width="32" height="31" viewBox="0 0 32 31"><path d="M16 2.5 L19.8 11.5 L29.5 12.2 L22.1 18.5 L24.4 28 L16 23 L7.6 28 L9.9 18.5 L2.5 12.2 L12.2 11.5 Z" fill="none" stroke="#474747" stroke-width="2.6" stroke-linejoin="round"/></svg>
<svg style="left:3380px;top:104px" width="36" height="33" viewBox="0 0 36 33"><path d="M3 9 H11 V6 A4 4 0 0 1 19 6 V9 H27 V16 H30 A4 4 0 0 1 30 24 H27 V31 H3 V24 H6 A3 3 0 0 0 6 17 H3 Z" fill="none" stroke="#474747" stroke-width="2.8" stroke-linejoin="round"/></svg>
<div class="a" style="left:3446px;top:107px;width:2px;height:29px;background:#c7c7c7"></div>
<svg style="left:3482px;top:104px" width="34" height="33" viewBox="0 0 34 33"><path d="M17 2 V22 M8 13 L17 22 L26 13" fill="none" stroke="#474747" stroke-width="3"/><path d="M3 24 V31 H31 V24" fill="none" stroke="#474747" stroke-width="3"/></svg>
<div class="a" style="left:3549px;top:102px;width:40px;height:40px;border-radius:50%;background:#eceff3"></div>
<div class="a" style="left:3634px;top:108px;width:6px;height:6px;border-radius:50%;background:#474747"></div>
<div class="a" style="left:3634px;top:119px;width:6px;height:6px;border-radius:50%;background:#474747"></div>
<div class="a" style="left:3634px;top:130px;width:6px;height:6px;border-radius:50%;background:#474747"></div>
<!-- CANVA HEADER -->
<div class="a" style="left:0;top:167px;width:3680px;height:135px;background:linear-gradient(90deg,#00c4cc 0%,#0fb2dc 28%,#3f85e2 55%,#5a63e6 72%,#7d2ae8 100%)"></div>
<div class="a" style="left:70px;top:217px;width:33px;height:4px;border-radius:2px;background:#fff"></div>
<div class="a" style="left:70px;top:231px;width:33px;height:4px;border-radius:2px;background:#fff"></div>
<div class="a" style="left:70px;top:245px;width:33px;height:4px;border-radius:2px;background:#fff"></div>
<div class="t" style="left:191.5px;top:215.5px;font-size:36px;font-weight:bold;color:#fff;transform:scaleX(0.9492);transform-origin:0 0">File</div>
<svg style="left:325px;top:222px" width="25" height="23" viewBox="0 0 25 23"><path d="M2 6 L7 12 L12.5 3 L18 12 L23 6 L21 17 H4 Z" fill="#d8f4f8"/><circle cx="2" cy="5" r="2" fill="#d8f4f8"/><circle cx="12.5" cy="2.5" r="2" fill="#d8f4f8"/><circle cx="23" cy="5" r="2" fill="#d8f4f8"/><rect x="4" y="19" width="17" height="3" fill="#d8f4f8"/></svg>
<div class="t" style="left:365.0px;top:215.5px;font-size:36px;font-weight:bold;color:#fff;transform:scaleX(0.9099);transform-origin:0 0">Resize</div>
<svg style="left:552px;top:211px" width="46" height="45" viewBox="0 0 46 45"><path d="M35 3 L43 11 L14 40 L3 43 L6 32 Z M30 8 L38 16 M6 32 L14 40" fill="none" stroke="#fff" stroke-width="3.4" stroke-linejoin="round"/></svg>
<div class="t" style="left:621.5px;top:215.5px;font-size:36px;font-weight:bold;color:#fff;transform:scaleX(0.9492);transform-origin:0 0">Editing</div>
<svg style="left:760px;top:225px" width="30" height="18" viewBox="0 0 30 18"><path d="M2 2 L15 15 L28 2" fill="none" stroke="#fff" stroke-width="3.4"/></svg>
<div class="a" style="left:841px;top:195px;width:2px;height:76px;background:rgba(255,255,255,0.2)"></div>
<svg style="left:890px;top:214px" width="46" height="38" viewBox="0 0 46 38"><path d="M12 2 L3 11 L12 20 M3 11 H30 A12 12 0 0 1 30 35 H20" fill="none" stroke="#fff" stroke-width="3.4" stroke-linejoin="round"/></svg>
<svg style="left:1001px;top:214px" width="46" height="38" viewBox="0 0 46 38"><path d="M34 2 L43 11 L34 20 M43 11 H16 A12 12 0 0 0 16 35 H26" fill="none" stroke="rgba(255,255,255,0.45)" stroke-width="3.4" stroke-linejoin="round"/></svg>
<div class="a" style="left:1094px;top:195px;width:2px;height:76px;background:rgba(255,255,255,0.2)"></div>
<svg style="left:1137px;top:211px" width="54" height="42" viewBox="0 0 54 42"><path d="M14 39 H40 A11 11 0 0 0 42 17 A16 16 0 0 0 12 14 A12.5 12.5 0 0 0 14 39 Z" fill="none" stroke="#fff" stroke-width="3.2"/><path d="M17 23 L25 30 L39 16" fill="none" stroke="#fff" stroke-width="3.2"/></svg>
<!-- toast -->
<div class="a" style="left:1301px;top:174px;width:1078px;height:119px;border-radius:30px;background:#2a2b2c;box-shadow:0 2px 6px rgba(0,0,0,0.25)"></div>
<div class="t" style="left:1361.0px;top:218px;font-size:37px;font-weight:bold;color:#fff;transform:scaleX(0.9150);transform-origin:0 0">Tracer has successfully uploaded the media to your library.</div>
<!-- right buttons -->
<div class="a" style="left:2380px;top:186px;width:96px;height:95px;border-radius:22px;border:2px solid rgba(255,255,255,0.22)"></div>
<svg style="left:2404px;top:214px" width="49" height="40" viewBox="0 0 49 40"><path d="M2 38 H47 M14 36 V22 M24 36 V4 M34 36 V16" fill="none" stroke="#fff" stroke-width="3.2"/></svg>
<div class="a" style="left:2496px;top:186px;width:95px;height:95px;border-radius:22px;border:2px solid rgba(255,255,255,0.22)"></div>
<svg style="left:2519px;top:208px" width="50" height="50" viewBox="0 0 50 50"><path d="M25 3 C37 3 47 10.5 47 21 C47 31 37 39 25 39 C23 39 21.5 39 20 38.5 L19 46 L14 37 C7 34 3 28 3 21 C3 10.5 13 3 25 3 Z" fill="none" stroke="#fff" stroke-width="3.4" stroke-linejoin="round"/></svg>
<div class="a" style="left:2611px;top:186px;width:217px;height:95px;border-radius:22px;border:2px solid rgba(255,255,255,0.22)"></div>
<svg style="left:2641px;top:213px" width="38" height="42" viewBox="0 0 38 42"><path d="M4 4 Q4 1 7 2.5 L35 18.5 Q38 21 35 23.5 L7 39.5 Q4 41 4 38 Z" fill="#fff"/></svg>
<div class="t" style="left:2704.0px;top:215.5px;font-size:36px;font-weight:bold;color:#fff;transform:scaleX(0.9770);transform-origin:0 0">10.0s</div>
<div class="a" style="left:2848px;top:186px;width:564px;height:95px;border-radius:22px;border:2px solid rgba(255,255,255,0.22)"></div>
<svg style="left:2873px;top:211px" width="46" height="45" viewBox="0 0 46 45"><rect x="2" y="2" width="42" height="41" rx="8" fill="none" stroke="#fff" stroke-width="3.4"/><path d="M23 2 V43 M23 22 H44" stroke="#fff" stroke-width="3.4"/><circle cx="12" cy="12" r="3.5" fill="#fff"/></svg>
<div class="t" style="left:2942.5px;top:215.5px;font-size:36px;font-weight:bold;color:#fff;transform:scaleX(0.9430);transform-origin:0 0">Publish as Brand Template</div>
<div class="a" style="left:3432px;top:186px;width:229px;height:95px;border-radius:22px;background:#f3eefd"></div>
<svg style="left:3457px;top:209px" width="46" height="48" viewBox="0 0 46 48"><path d="M23 32 V4 M12 14 L23 3 L34 14" fill="none" stroke="#0d1216" stroke-width="3.4" stroke-linejoin="round"/><path d="M3 24 V45 H43 V24" fill="none" stroke="#0d1216" stroke-width="3.4"/></svg>
<div class="t" style="left:3529.2px;top:215.5px;font-size:36px;font-weight:bold;color:#0d1216;transform:scaleX(0.9388);transform-origin:0 0">Share</div>
<!-- TASKBAR -->
<div class="a" style="left:0;top:1993px;width:3680px;height:77px;background:#101010;border-radius:0 0 24px 24px"></div>
<svg style="left:30px;top:2015px" width="33" height="33" viewBox="0 0 33 33"><path d="M0 4.5 L13.5 2.7 V15.5 H0 Z M15.5 2.4 L33 0 V15.5 H15.5 Z M0 17.5 H13.5 V30.3 L0 28.5 Z M15.5 17.5 H33 V33 L15.5 30.6 Z" fill="#fff"/></svg>
<svg style="left:121px;top:2014px" width="44" height="36" viewBox="0 0 44 36"><path d="M1 3 Q1 1 3 1 H15 L19 5 H41 Q43 5 43 7 V33 Q43 35 41 35 H3 Q1 35 1 33 Z" fill="#e9b53e"/><path d="M1 10 H43 V33 Q43 35 41 35 H3 Q1 35 1 33 Z" fill="#f6cf5a"/><rect x="12" y="22" width="20" height="13" fill="#2f7fd4"/><rect x="16" y="26" width="12" height="9" fill="#f6cf5a"/></svg>
<svg style="left:215px;top:2012px" width="50" height="50" viewBox="0 0 50 50"><circle cx="24" cy="24" r="23" fill="#db4437"/><path d="M24 1 A23 23 0 0 1 44 12.5 L24 12.5 Z" fill="#db4437"/><path d="M44 12.5 A23 23 0 0 1 24 47 L34 29 Z" fill="#f4c20d"/><path d="M24 47 A23 23 0 0 1 4 12.5 L14 29 Z" fill="#0f9d58"/><circle cx="24" cy="24" r="10" fill="#fff"/><circle cx="24" cy="24" r="8" fill="#4285f4"/><circle cx="37" cy="38" r="11" fill="#f2d7b0"/><path d="M31 42 L35 33 L40 36 L44 31 L43 42 Z" fill="#e28a2b"/></svg>
<div class="a" style="left:286px;top:1993px;width:91px;height:77px;background:#2e2e2e"></div>
<svg style="left:309px;top:2012px" width="50" height="50" viewBox="0 0 50 50"><circle cx="24" cy="24" r="23" fill="#db4437"/><path d="M44 12.5 A23 23 0 0 1 24 47 L34 29 Z" fill="#f4c20d"/><path d="M24 47 A23 23 0 0 1 4 12.5 L14 29 Z" fill="#0f9d58"/><circle cx="24" cy="24" r="10" fill="#fff"/><circle cx="24" cy="24" r="8" fill="#4285f4"/><circle cx="37" cy="38" r="11" fill="#e4e4e4"/></svg>
<svg style="left:403px;top:2013px" width="48" height="48" viewBox="0 0 48 48"><circle cx="23" cy="23" r="21" fill="#2a2a2a" stroke="#d0d0d0" stroke-width="2.5"/><circle cx="23" cy="14" r="6" fill="none" stroke="#d0d0d0" stroke-width="2"/><circle cx="15" cy="28" r="6" fill="none" stroke="#d0d0d0" stroke-width="2"/><circle cx="31" cy="28" r="6" fill="none" stroke="#d0d0d0" stroke-width="2"/><circle cx="37" cy="38" r="9" fill="#f01818"/></svg>
<div class="a" style="left:105px;top:2065px;width:77px;height:5px;background:#7fb0e6"></div>
<div class="a" style="left:199px;top:2065px;width:77px;height:5px;background:#7fb0e6"></div>
<div class="a" style="left:286px;top:2065px;width:91px;height:5px;background:#9dc6f2"></div>
<div class="a" style="left:387px;top:2065px;width:76px;height:5px;background:#7fb0e6"></div>
<div class="t" style="left:2958.4px;top:2009px;font-size:21px;color:#fff;transform:scaleX(1.1111);transform-origin:0 0">U:</div>
<div class="t" style="left:2958.4px;top:2034px;font-size:21px;color:#fff;transform:scaleX(1.1111);transform-origin:0 0">D:</div>
<div class="t" style="left:3027.0px;top:2009px;font-size:21px;color:#fff;transform:scaleX(0.9571);transform-origin:0 0">25 kB/s</div>
<div class="t" style="left:3038.0px;top:2034px;font-size:21px;color:#fff;transform:scaleX(0.9649);transform-origin:0 0">5 kB/s</div>
<svg style="left:3110px;top:2024px" width="24" height="14" viewBox="0 0 24 14"><path d="M2 12 L12 2 L22 12" fill="none" stroke="#fff" stroke-width="2.4"/></svg>
<svg style="left:3156px;top:2016px" width="23" height="32" viewBox="0 0 23 32"><rect x="6" y="0" width="11" height="20" rx="5.5" fill="#fff"/><path d="M2 14 Q2 25 11.5 25 Q21 25 21 14 M11.5 25 V31 M6 31 H17" fill="none" stroke="#fff" stroke-width="2"/></svg>
<svg style="left:3198px;top:2016px" width="33" height="33" viewBox="0 0 33 33"><circle cx="16.5" cy="16.5" r="16" fill="#3a3f55"/><path d="M17 2 A14.5 14.5 0 0 1 17 31 Q25 16.5 17 2 Z" fill="#e05555"/></svg>
<svg style="left:3247px;top:2017px" width="28" height="29" viewBox="0 0 28 29"><rect x="0" y="0" width="28" height="29" fill="#15d02a"/><rect x="7" y="3" width="14" height="10" fill="#1a1a1a"/><circle cx="14" cy="8" r="3" fill="#aaa"/><rect x="8" y="16" width="12" height="13" fill="#9aa0c8"/></svg>
<svg style="left:3296px;top:2018px" width="27" height="27" viewBox="0 0 27 27"><path d="M2 24 A22 22 0 0 1 24 2 M8 24 A16 16 0 0 1 24 8 M14 24 A10 10 0 0 1 24 14" fill="none" stroke="#fff" stroke-width="2.2"/><circle cx="22" cy="22" r="3" fill="#fff"/></svg>
<svg style="left:3336px;top:2016px" width="33" height="32" viewBox="0 0 33 32"><path d="M2 10 H8 L16 3 V29 L8 22 H2 Z" fill="none" stroke="#fff" stroke-width="2"/><path d="M21 11 Q24 16 21 21 M25 7 Q30 16 25 25 M29 3 Q36 16 29 29" fill="none" stroke="#fff" stroke-width="2"/></svg>
<div class="t" style="left:3385.6px;top:2020px;font-size:23px;color:#fff;transform:scaleX(0.9149);transform-origin:0 0">ENG</div>
<div class="t" style="left:3484.5px;top:2003px;font-size:22px;color:#fff;transform:scaleX(0.9434);transform-origin:0 0">15:44</div>
<div class="t" style="left:3455.0px;top:2037px;font-size:22px;color:#fff;transform:scaleX(1.0092);transform-origin:0 0">27/12/2024</div>
<svg style="left:3601px;top:2016px" width="33" height="30" viewBox="0 0 33 30"><path d="M0 0 H31 V25 H22 L16 31 L10 25 H0 Z" fill="#fff"/><path d="M6 6.5 H25 M6 12 H25 M6 17.5 H17" stroke="#4a4a4a" stroke-width="2.2"/></svg>
<div class="a" style="left:3670px;top:1993px;width:3px;height:70px;background:#6a6a6a"></div>
</body></html>
